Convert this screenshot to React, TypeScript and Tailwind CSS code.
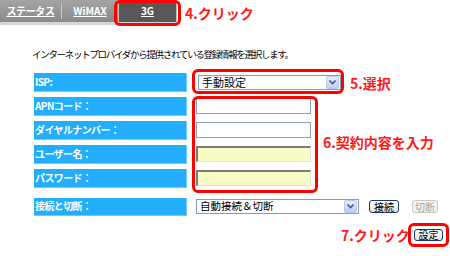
import React from "react";

const font = { fontFamily: '"Noto Sans CJK JP", "Noto Sans", sans-serif' };

function Chevron() {
  return (
    <div className="w-[13px] h-[13px] flex items-center justify-center rounded-[2px] border border-[#b9cbe9] bg-gradient-to-b from-[#e6eefc] to-[#b9cff5]">
      <svg width="7" height="5" viewBox="0 0 7 5">
        <path d="M0.5 0.5 L3.5 3.5 L6.5 0.5" stroke="#4a5f8c" strokeWidth="1.6" fill="none" />
      </svg>
    </div>
  );
}

function Label({ text, h = "h-[19px]" }: { text: string; h?: string }) {
  return (
    <div className={`w-[153px] ${h} bg-[#22aefc] border-r border-b border-[#6fcaff] flex items-center pl-[1px] text-white text-[10px] font-bold leading-none tracking-[-0.6px]`}>
      {text}
    </div>
  );
}

export default function App() {
  return (
    <div className="relative w-[450px] h-[256px] bg-white overflow-hidden text-black" style={font}>
      {/* Tab bar */}
      <div className="w-[177px]">
        <div className="h-[22px] flex items-stretch bg-gradient-to-b from-[#a4a4a4] to-[#8a8a8a]">
          <div className="w-[61px] flex items-center justify-center text-white text-[10px] font-bold underline leading-none tracking-[-0.4px]">ステータス</div>
          <div className="w-[1px] my-[3px] bg-[#c8c8c8]" />
          <div className="w-[56px] flex items-center justify-center text-white text-[10px] font-bold underline leading-none">WiMAX</div>
          <div className="w-[59px] flex items-center justify-center bg-[#585858] border-l border-r border-[#c0c0c0] text-white text-[10px] font-bold underline leading-none">3G</div>
        </div>
        <div className="h-[3px] bg-[#d6d6d6]" />
      </div>

      {/* Description */}
      <div className="mt-[25px] ml-[32px] text-[9.5px] leading-none tracking-[-1.3px]">
        インターネットプロバイダから提供されている登録情報を選択します。
      </div>

      {/* Form */}
      <div className="mt-[13px] ml-[34px] flex flex-col gap-[5px]">
        <div className="flex items-center gap-[11px]">
          <Label text="ISP:" />
          <div className="w-[143px] h-[15px] border border-[#7f9db9] bg-white flex items-center justify-between pl-[3px] pr-[1px]">
            <span className="text-[11px] leading-none">手動設定</span>
            <Chevron />
          </div>
        </div>
        <div className="flex items-center gap-[9px]">
          <Label text="APNコード：" />
          <div className="w-[115px] h-[16px] border border-[#8aa4bc] bg-white" />
        </div>
        <div className="flex items-center gap-[9px]">
          <Label text="ダイヤルナンバー：" />
          <div className="w-[115px] h-[16px] border border-[#8aa4bc] bg-white" />
        </div>
        <div className="flex items-center gap-[9px]">
          <Label text="ユーザー名：" />
          <div className="w-[115px] h-[16px] border-t-2 border-l-2 border-r border-b border-t-[#7a7a7a] border-l-[#7a7a7a] border-r-[#e4e4e4] border-b-[#e4e4e4] bg-[#fafcc6]" />
        </div>
        <div className="flex items-center gap-[9px]">
          <Label text="パスワード：" />
          <div className="w-[115px] h-[16px] border-t-2 border-l-2 border-r border-b border-t-[#7a7a7a] border-l-[#7a7a7a] border-r-[#e4e4e4] border-b-[#e4e4e4] bg-[#fafcc6]" />
        </div>
        <div className="flex items-center gap-[9px] mt-[5px]">
          <Label text="接続と切断：" h="h-[18px]" />
          <div className="w-[163px] h-[15px] border border-[#7f9db9] bg-white flex items-center justify-between pl-[3px] pr-[1px]">
            <span className="text-[10.5px] leading-none">自動接続＆切断</span>
            <Chevron />
          </div>
          <div className="ml-[1px] w-[30px] h-[13px] rounded-[3px] border border-[#1c3566] bg-gradient-to-b from-white to-[#e2e2dc] flex items-center justify-center text-[10px] leading-none">接続</div>
          <div className="ml-[4px] w-[26px] h-[13px] rounded-[3px] border border-[#c9c7ba] bg-[#f4f4f0] flex items-center justify-center text-[10px] leading-none text-[#aca899]">切断</div>
        </div>
        <div className="flex justify-end mr-[7px] mt-[8px]">
          <div className="w-[29px] h-[12px] rounded-[3px] border border-[#1c3566] bg-gradient-to-b from-white to-[#e2e2dc] flex items-center justify-center text-[10px] leading-none">設定</div>
        </div>
      </div>

      {/* Annotations */}
      <div className="absolute left-[114px] top-[0px] w-[67px] h-[26px] border-[3px] border-[#ff0000] rounded-[6px]" />
      <div className="absolute left-[185px] top-[6px] text-[14px] font-bold text-[#ff1a1a] leading-none">4.クリック</div>

      <div className="absolute left-[192px] top-[69px] w-[152px] h-[25px] border-[3px] border-[#ff0000] rounded-[6px]" />
      <div className="absolute left-[350px] top-[76px] text-[14px] font-bold text-[#ff1a1a] leading-none">5.選択</div>

      <div className="absolute left-[192px] top-[96px] w-[126px] h-[97px] border-[3px] border-[#ff0000] rounded-[6px]" />
      <div className="absolute left-[323px] top-[135px] text-[14px] font-bold text-[#ff1a1a] leading-none">6.契約内容を入力</div>

      <div className="absolute left-[408px] top-[223px] w-[41px] h-[24px] border-[3px] border-[#ff0000] rounded-[6px]" />
      <div className="absolute left-[341px] top-[228px] text-[14px] font-bold text-[#ff1a1a] leading-none">7.クリック</div>
    </div>
  );
}
